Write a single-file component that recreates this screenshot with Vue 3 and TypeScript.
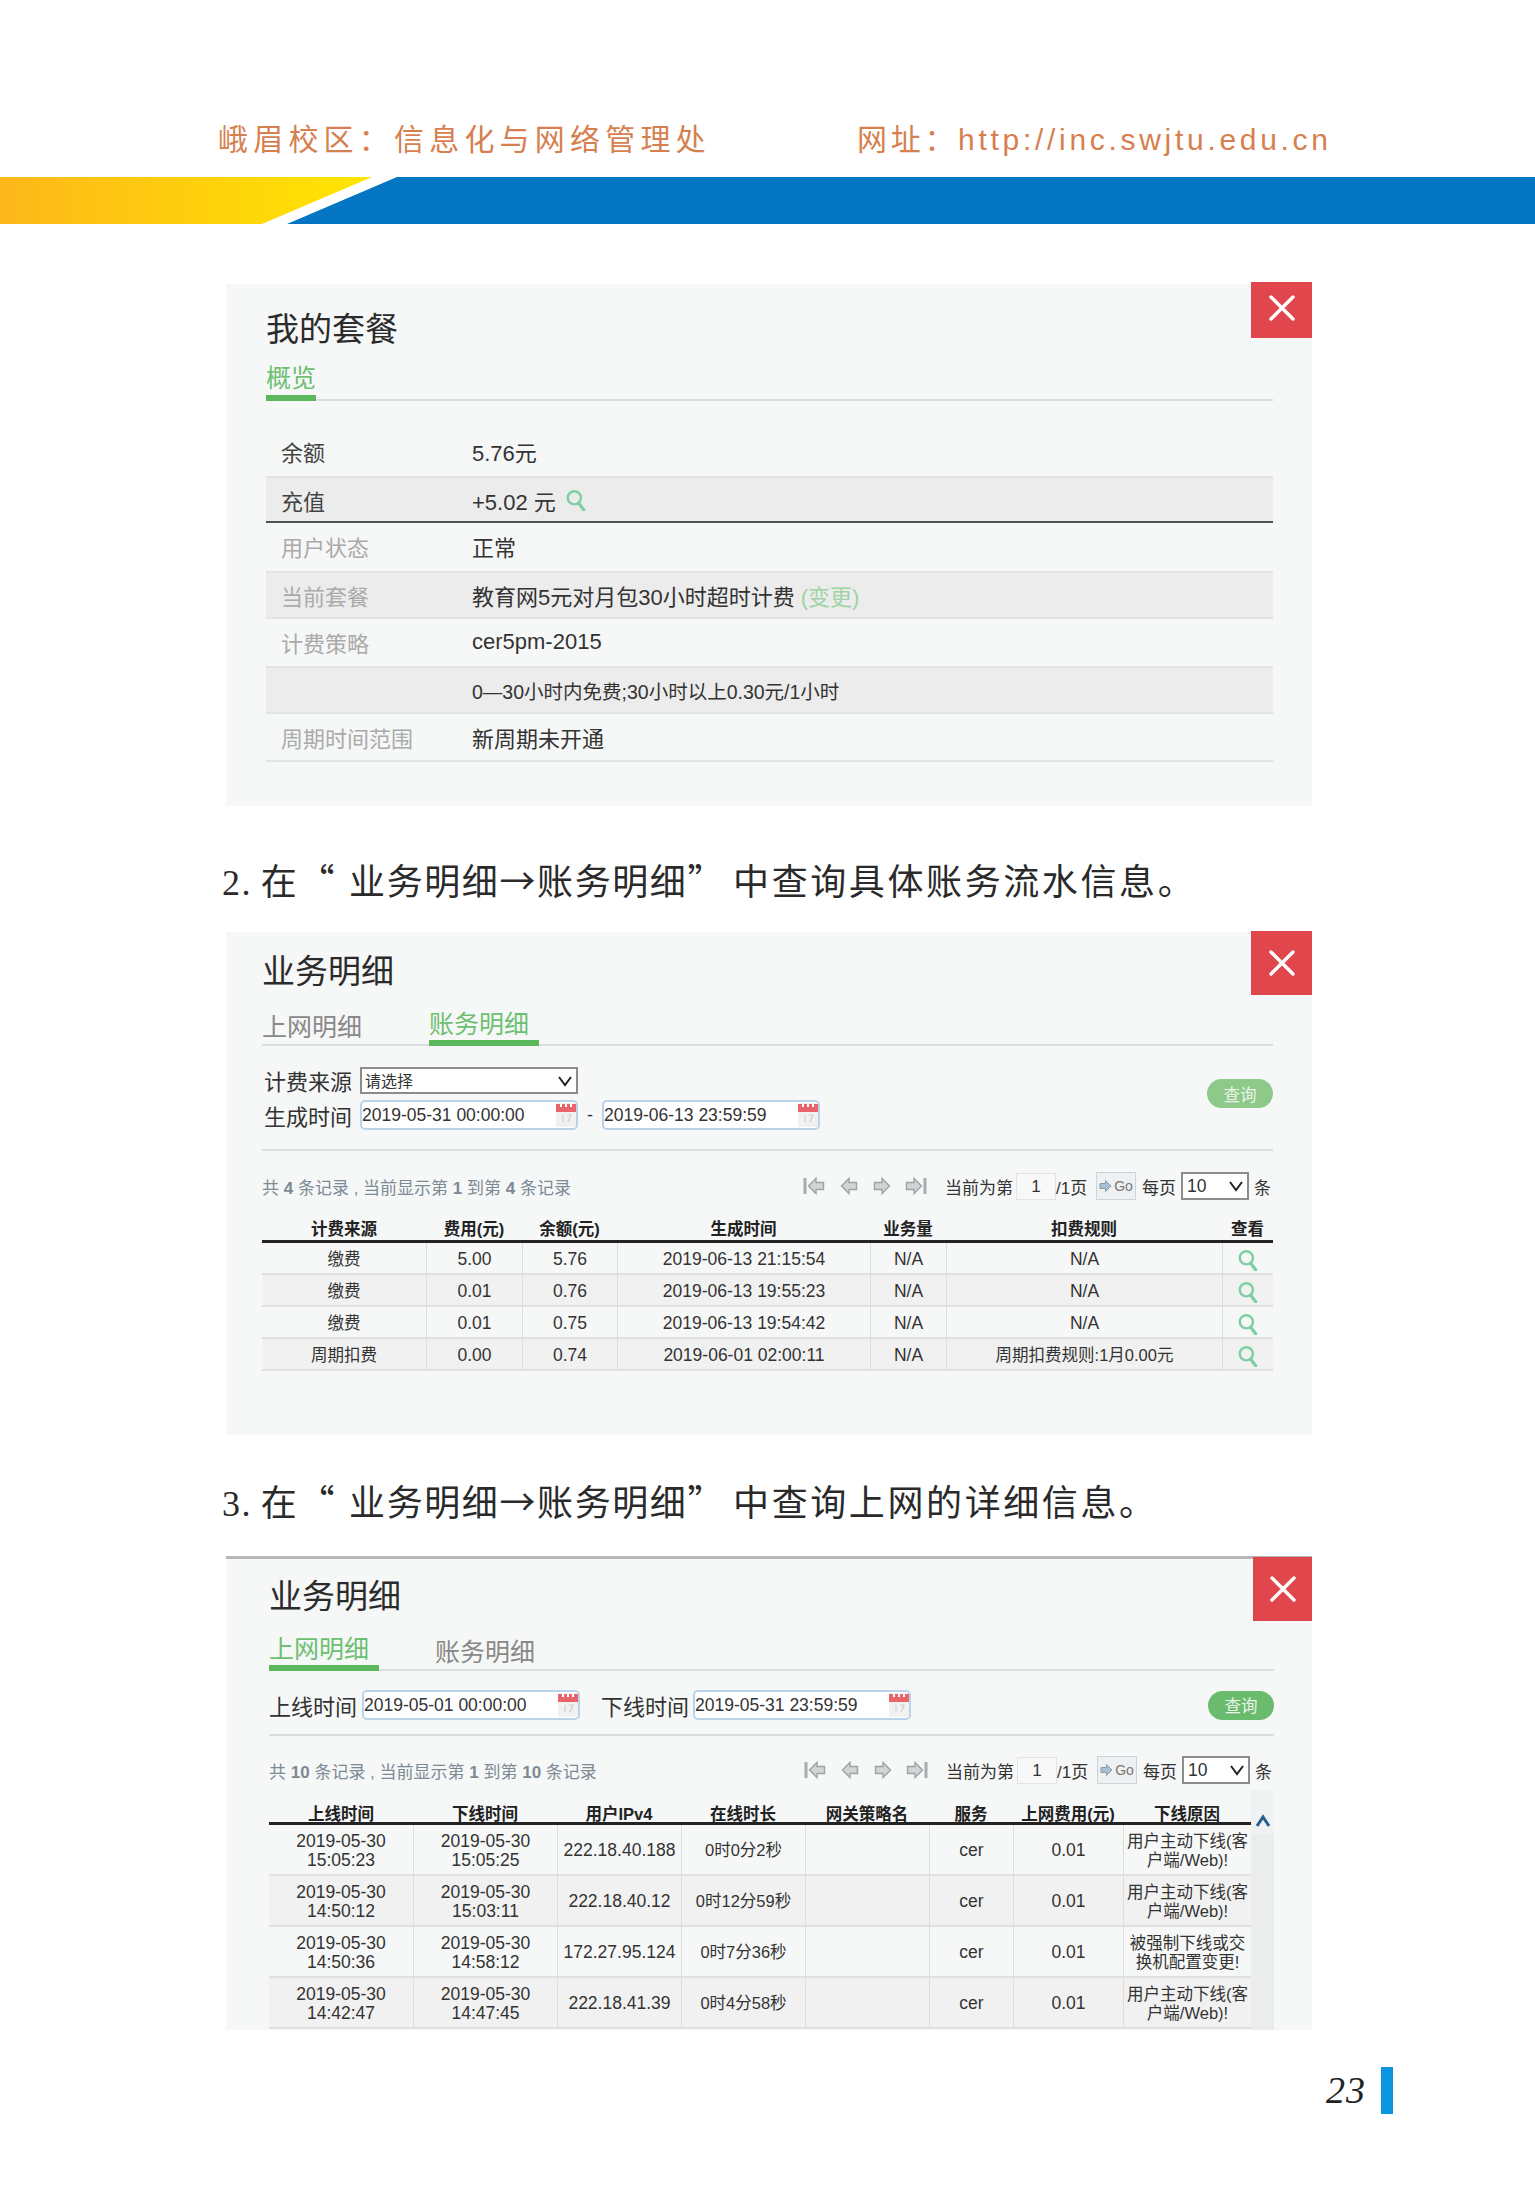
<script setup lang="ts">
interface Row { k: string; v: string; shaded: boolean; dark?: boolean; small?: boolean; link?: string; search?: boolean; strongLabel?: boolean }
const rows: Row[] = [
  { k: '余额', v: '5.76元', shaded: false, strongLabel: true },
  { k: '充值', v: '+5.02 元', shaded: true, dark: true, search: true, strongLabel: true },
  { k: '用户状态', v: '正常', shaded: false },
  { k: '当前套餐', v: '教育网5元对月包30小时超时计费', shaded: true, link: '(变更)' },
  { k: '计费策略', v: 'cer5pm-2015', shaded: false },
  { k: '', v: '0—30小时内免费;30小时以上0.30元/1小时', shaded: true, small: true },
  { k: '周期时间范围', v: '新周期未开通', shaded: false },
]
const billHead = ['计费来源', '费用(元)', '余额(元)', '生成时间', '业务量', '扣费规则', '查看']
const billRows = [
  ['缴费', '5.00', '5.76', '2019-06-13 21:15:54', 'N/A', 'N/A'],
  ['缴费', '0.01', '0.76', '2019-06-13 19:55:23', 'N/A', 'N/A'],
  ['缴费', '0.01', '0.75', '2019-06-13 19:54:42', 'N/A', 'N/A'],
  ['周期扣费', '0.00', '0.74', '2019-06-01 02:00:11', 'N/A', '周期扣费规则:1月0.00元'],
]
const netHead = ['上线时间', '下线时间', '用户IPv4', '在线时长', '网关策略名', '服务', '上网费用(元)', '下线原因']
const netRows = [
  ['2019-05-30 15:05:23', '2019-05-30 15:05:25', '222.18.40.188', '0时0分2秒', '', 'cer', '0.01', '用户主动下线(客户端/Web)!'],
  ['2019-05-30 14:50:12', '2019-05-30 15:03:11', '222.18.40.12', '0时12分59秒', '', 'cer', '0.01', '用户主动下线(客户端/Web)!'],
  ['2019-05-30 14:50:36', '2019-05-30 14:58:12', '172.27.95.124', '0时7分36秒', '', 'cer', '0.01', '被强制下线或交换机配置变更!'],
  ['2019-05-30 14:42:47', '2019-05-30 14:47:45', '222.18.41.39', '0时4分58秒', '', 'cer', '0.01', '用户主动下线(客户端/Web)!'],
]
const isLatin = (s: string): boolean => /^[\x00-\x7f]*$/.test(s)
</script>

<template>
  <div class="page">
    <svg width="0" height="0" class="defs">
      <defs>
        <symbol id="mag" viewBox="0 0 20 20">
          <circle cx="8.5" cy="8" r="6" fill="none" stroke="currentColor" stroke-width="2.2" />
          <path d="M12.5 13 L17 19" stroke="currentColor" stroke-width="3" stroke-linecap="round" />
        </symbol>
        <symbol id="cal" viewBox="0 0 20 24">
          <rect x="0" y="0" width="20" height="24" fill="#f1f1f1" />
          <rect x="0" y="1" width="20" height="8" fill="#e9656b" />
          <path d="M5 1v3M10 1v3M15 1v3" stroke="#fff" stroke-width="2" />
          <path d="M7 12v7M11 12h4l-3 7" fill="none" stroke="#cfcfcf" stroke-width="1.2" />
        </symbol>
        <symbol id="first" viewBox="0 0 22 22">
          <path d="M2 3v16" stroke="#a9acae" stroke-width="3" />
          <path d="M5.5 11 L13 3.5 V7.5 H20.5 V14.5 H13 V18.5 Z" fill="#d2d4d5" stroke="#a0a3a5" stroke-width="1.4" />
        </symbol>
        <symbol id="prev" viewBox="0 0 18 22">
          <path d="M1.5 11 L9 3.5 V7.5 H16.5 V14.5 H9 V18.5 Z" fill="#d2d4d5" stroke="#a0a3a5" stroke-width="1.4" />
        </symbol>
        <symbol id="next" viewBox="0 0 18 22">
          <path d="M16.5 11 L9 3.5 V7.5 H1.5 V14.5 H9 V18.5 Z" fill="#d2d4d5" stroke="#a0a3a5" stroke-width="1.4" />
        </symbol>
        <symbol id="last" viewBox="0 0 22 22">
          <path d="M20 3v16" stroke="#a9acae" stroke-width="3" />
          <path d="M16.5 11 L9 3.5 V7.5 H1.5 V14.5 H9 V18.5 Z" fill="#d2d4d5" stroke="#a0a3a5" stroke-width="1.4" />
        </symbol>
        <symbol id="goa" viewBox="0 0 13 14">
          <path d="M12 7 L6.5 1.5 V4.5 H1 V9.5 H6.5 V12.5 Z" fill="#a9c0d4" stroke="#8b9bab" stroke-width="1" />
        </symbol>
        <symbol id="x" viewBox="0 0 30 30">
          <path d="M4 4 L26 26 M26 4 L4 26" stroke="#fff" stroke-width="3.4" stroke-linecap="round" />
        </symbol>
      </defs>
    </svg>

    <header class="head">
      <span class="head-a">峨眉校区：信息化与网络管理处</span>
      <span class="head-b">网址：http://inc.swjtu.edu.cn</span>
    </header>

    <svg class="banner" viewBox="0 0 1535 47" preserveAspectRatio="none">
      <defs>
        <linearGradient id="gold" x1="0" x2="1" y1="0" y2="0">
          <stop offset="0" stop-color="#fdb71a" />
          <stop offset="1" stop-color="#ffe600" />
        </linearGradient>
      </defs>
      <polygon points="0,0 372,0 262,47 0,47" fill="url(#gold)" />
      <polygon points="397,0 1535,0 1535,47 287,47" fill="#0375c2" />
    </svg>

    <section class="panel p1">
      <button class="close"><svg width="30" height="30"><use href="#x" /></svg></button>
      <h2 class="title">我的套餐</h2>
      <div class="tabs">
        <span class="tab on">概览</span>
      </div>
      <div class="kv">
        <div v-for="r in rows" :key="r.v" class="kv-row" :class="{ shaded: r.shaded, dark: r.dark }">
          <span class="kv-k" :class="{ strong: r.strongLabel }">{{ r.k }}</span>
          <span class="kv-v" :class="{ small: r.small }">{{ r.v }}<span v-if="r.link" class="link">{{ r.link }}</span><svg v-if="r.search" class="mag-inline" width="22" height="22"><use href="#mag" /></svg></span>
        </div>
      </div>
    </section>

    <p class="step s2"><span class="lat">2. </span>在<span class="qo">“</span>业务明细→账务明细<span class="qc">”</span><span class="tail">中查询具体账务流水信息。</span></p>

    <section class="panel p2">
      <button class="close"><svg width="30" height="30"><use href="#x" /></svg></button>
      <h2 class="title">业务明细</h2>
      <div class="tabs">
        <span class="tab off">上网明细</span>
        <span class="tab on wide">账务明细</span>
      </div>
      <div class="filter f2">
        <div class="filter-lines">
          <div class="line">
            <span class="lbl">计费来源</span>
            <span class="select big">请选择<svg class="chev" width="16" height="12" viewBox="0 0 16 12"><path d="M2 2 L8 10 L14 2" fill="none" stroke="#222" stroke-width="2" /></svg></span>
          </div>
          <div class="line">
            <span class="lbl">生成时间</span>
            <span class="date">2019-05-31 00:00:00<svg class="cal" width="20" height="24"><use href="#cal" /></svg></span>
            <span class="dash">-</span>
            <span class="date">2019-06-13 23:59:59<svg class="cal" width="20" height="24"><use href="#cal" /></svg></span>
          </div>
        </div>
        <button class="query pale">查询</button>
      </div>
      <div class="pager">
        <span class="count">共 <b>4</b> 条记录 , 当前显示第 <b>1</b> 到第 <b>4</b> 条记录</span>
        <div class="pg-right">
          <svg class="ic" width="22" height="22"><use href="#first" /></svg>
          <svg class="ic" width="18" height="22"><use href="#prev" /></svg>
          <svg class="ic" width="18" height="22"><use href="#next" /></svg>
          <svg class="ic" width="22" height="22"><use href="#last" /></svg>
          <span class="pg-t">当前为第</span>
          <span class="pg-input">1</span>
          <span class="pg-of">/1页</span>
          <span class="go"><svg width="13" height="14"><use href="#goa" /></svg>Go</span>
          <span class="pg-per">每页</span>
          <span class="select num">10<svg class="chev" width="16" height="12" viewBox="0 0 16 12"><path d="M2 2 L8 10 L14 2" fill="none" stroke="#222" stroke-width="2" /></svg></span>
          <span class="pg-unit">条</span>
        </div>
      </div>
      <div class="grid bill g-head">
        <span v-for="h in billHead" :key="h" class="hd">{{ h }}</span>
      </div>
      <div v-for="(r, i) in billRows" :key="i" class="grid bill g-row" :class="{ alt: i % 2 === 1 }">
        <span v-for="(c, j) in r" :key="j" class="cell" :class="{ latin: isLatin(c) }">{{ c }}</span>
        <span class="cell"><svg class="mag" width="22" height="22"><use href="#mag" /></svg></span>
      </div>
    </section>

    <p class="step s3"><span class="lat">3. </span>在<span class="qo">“</span>业务明细→账务明细<span class="qc">”</span><span class="tail">中查询上网的详细信息。</span></p>

    <section class="panel p3">
      <button class="close"><svg width="30" height="30"><use href="#x" /></svg></button>
      <h2 class="title">业务明细</h2>
      <div class="tabs">
        <span class="tab on wide">上网明细</span>
        <span class="tab off">账务明细</span>
      </div>
      <div class="filter f3">
        <div class="line">
          <span class="lbl">上线时间</span>
          <span class="date">2019-05-01 00:00:00<svg class="cal" width="20" height="24"><use href="#cal" /></svg></span>
          <span class="lbl second">下线时间</span>
          <span class="date">2019-05-31 23:59:59<svg class="cal" width="20" height="24"><use href="#cal" /></svg></span>
        </div>
        <button class="query">查询</button>
      </div>
      <div class="pager">
        <span class="count">共 <b>10</b> 条记录 , 当前显示第 <b>1</b> 到第 <b>10</b> 条记录</span>
        <div class="pg-right">
          <svg class="ic" width="22" height="22"><use href="#first" /></svg>
          <svg class="ic" width="18" height="22"><use href="#prev" /></svg>
          <svg class="ic" width="18" height="22"><use href="#next" /></svg>
          <svg class="ic" width="22" height="22"><use href="#last" /></svg>
          <span class="pg-t">当前为第</span>
          <span class="pg-input">1</span>
          <span class="pg-of">/1页</span>
          <span class="go"><svg width="13" height="14"><use href="#goa" /></svg>Go</span>
          <span class="pg-per">每页</span>
          <span class="select num">10<svg class="chev" width="16" height="12" viewBox="0 0 16 12"><path d="M2 2 L8 10 L14 2" fill="none" stroke="#222" stroke-width="2" /></svg></span>
          <span class="pg-unit">条</span>
        </div>
      </div>
      <div class="net-wrap">
        <div class="net-table">
          <div class="grid net g-head">
            <span v-for="h in netHead" :key="h" class="hd">{{ h }}</span>
          </div>
          <div v-for="(r, i) in netRows" :key="i" class="grid net g-row" :class="{ alt: i % 2 === 1 }">
            <span v-for="(c, j) in r" :key="j" class="cell" :class="{ latin: isLatin(c) || j < 2, wrap: j === 0 || j === 1, reason: j === 7 }">{{ c }}</span>
          </div>
        </div>
        <div class="scroll">
          <div class="scroll-up">
            <svg width="16" height="14" viewBox="0 0 16 14"><path d="M2 12 L8 3 L14 12" fill="none" stroke="#27608f" stroke-width="3" /></svg>
          </div>
        </div>
      </div>
    </section>

    <footer class="foot">
      <span class="pno">23</span>
      <span class="bar"></span>
    </footer>
  </div>
</template>

<style>
html, body { margin: 0; background: #fff; }
</style>

<style scoped>
.page {
  width: 1535px;
  height: 2185px;
  overflow: hidden;
  background: #fff;
  font-family: "Liberation Sans", "Noto Sans CJK SC", sans-serif;
  color: #333;
}
.defs { position: absolute; }
.head {
  display: flex;
  padding: 121px 0 0 218px;
  height: 177px;
  box-sizing: border-box;
  font-size: 30px;
  line-height: 38px;
  color: #d67f4f;
  white-space: nowrap;
}
.head-a { width: 639px; letter-spacing: 5.2px; }
.head-b { letter-spacing: 3.7px; }
.banner { display: block; width: 1535px; height: 47px; }

.panel {
  position: relative;
  margin-left: 226px;
  width: 1086px;
  background: #f6f7f7;
  box-sizing: border-box;
}
.p1 { margin-top: 60px; height: 522px; padding: 26px 39px 0 40px; }
.p2 { height: 503px; padding: 20px 39px 0 36px; }
.p3 { height: 474px; padding: 18px 38px 0 43px; border-top: 3px solid #b5b7b8; }
.close {
  position: absolute;
  right: 0;
  top: -1px;
  width: 61px;
  height: 64px;
  padding: 0;
  border: 0;
  background: #e0464b;
  display: flex;
  align-items: center;
  justify-content: center;
}
.p1 .close { height: 56px; top: -2px; }
.p1 .close svg { margin-top: -4px; }
.p3 .close { width: 59px; top: -2px; height: 64px; }
.title {
  margin: 0;
  font-size: 33px;
  line-height: 40px;
  font-weight: 400;
  color: #2b2b2b;
}
.tabs {
  display: flex;
  gap: 69px;
  margin-top: 14px;
  height: 38px;
  border-bottom: 2px solid #dcdddd;
  font-size: 25px;
  line-height: 32px;
}
.p1 .tabs { margin-top: 10px; height: 39px; }
.p3 .tabs { gap: 56px; }
.tab { display: block; box-sizing: border-box; white-space: nowrap; }
.tab.off { color: #888; padding-top: 5px; }
.tab.on { color: #6dbf72; border-bottom: 6px solid #5cb85c; height: 40px; padding-top: 2px; }
.tab.wide { width: 110px; }
.p2 .tab.off { width: 98px; }
.p1 .tab.on { height: 41px; width: 50px; }

.kv { margin-top: 27px; }
.kv-row {
  display: flex;
  align-items: center;
  height: 47.7px;
  box-sizing: border-box;
  border-bottom: 2px solid transparent;
  font-size: 22px;
}
.kv-row.shaded { background: #ececec; border-top: 2px solid #e2e3e3; border-bottom: 2px solid #e2e3e3; }
.kv-row:last-child { border-bottom: 2px solid #e2e3e3; }
.kv-row.dark { border-bottom: 2px solid #4d5552; }
.kv-k { width: 206px; padding-left: 15px; box-sizing: border-box; color: #aaa; }
.kv-k.strong { color: #444; }
.kv-v { color: #333; display: flex; align-items: center; white-space: pre; }
.kv-v.small { font-size: 19.5px; }
.link { color: #9ed3a4; margin-left: 6px; }
.mag-inline { color: #7fcfa5; margin-left: 9px; }

.step {
  margin: 0;
  padding-left: 222px;
  font-family: "Noto Sans CJK SC", sans-serif;
  font-size: 36px;
  line-height: 48px;
  letter-spacing: 1.6px;
  color: #2a2a2a;
  white-space: pre;
  box-sizing: border-box;
}
.lat { font-family: "Liberation Serif", serif; margin-right: -2px; }
.qo { margin-right: 13px; }
.qc { margin-right: 8px; }
.tail { letter-spacing: 2.6px; }
.s2 { padding-top: 49px; height: 126px; }
.s3 { padding-top: 41px; height: 121px; }

.filter { display: flex; justify-content: space-between; border-bottom: 2px solid #dcdddd; box-sizing: border-box; }
.f2 { height: 105px; padding-top: 20px; }
.f2 .query { margin-top: 13px; }
.f3 { height: 65px; padding-top: 5px; align-items: center; }
.filter-lines { display: flex; flex-direction: column; gap: 7px; }
.line { display: flex; align-items: center; height: 28px; }
.lbl { font-size: 22px; color: #333; width: 98px; padding-left: 2px; box-sizing: border-box; white-space: nowrap; }
.f3 .lbl { width: 93px; padding-left: 0; }
.f3 .lbl.second { width: 92px; margin-left: 21px; }
.select {
  position: relative;
  display: inline-flex;
  align-items: center;
  box-sizing: border-box;
  border: 2px solid #8c8c8c;
  background: #fff;
  color: #333;
}
.select.big { width: 218px; height: 27px; font-size: 16px; padding-left: 3px; }
.select.num { width: 68px; height: 28px; font-size: 17.5px; padding-left: 4px; margin-left: 5px; }
.chev { position: absolute; right: 3px; top: 6px; }
.date {
  position: relative;
  display: inline-flex;
  align-items: center;
  width: 218px;
  height: 30px;
  box-sizing: border-box;
  border: 2px solid #b9d3ea;
  border-radius: 5px;
  background: #fff;
  font-size: 17.5px;
  color: #333;
  white-space: nowrap;
}
.cal { position: absolute; right: 0; top: 1px; }
.dash { width: 24px; text-align: center; font-size: 18px; }
.query {
  width: 66px;
  height: 29px;
  border: 0;
  padding: 0;
  border-radius: 15px;
  background: #6abb6e;
  color: #e8f5e8;
  font-size: 16.5px;
  font-family: inherit;
}
.query.pale { background: #8fc98a; }

.pager {
  display: flex;
  justify-content: space-between;
  align-items: center;
  margin-top: 7px;
  height: 56px;
  font-size: 17px;
  color: #333;
  white-space: nowrap;
}
.p3 .pager { margin-top: 6px; }
.count { color: #7d8a94; }
.count b { font-weight: 700; }
.pg-right { display: flex; align-items: center; padding-right: 2px; }
.ic { flex: none; }
.pg-right .ic:nth-child(1) { margin-right: 15px; }
.pg-right .ic:nth-child(2) { margin-right: 15px; }
.pg-right .ic:nth-child(3) { margin-right: 14px; }
.pg-right .ic:nth-child(4) { margin-right: 18px; }
.pg-t { width: 71px; }
.pg-input {
  width: 40px;
  height: 27px;
  box-sizing: border-box;
  border: 1px solid #e2e3e3;
  background: #f8f8f8;
  text-align: center;
  line-height: 25px;
}
.pg-of { width: 33px; }
.pg-per { width: 34px; }
.pg-unit { width: 17px; margin-left: 5px; }
.go {
  display: inline-flex;
  align-items: center;
  justify-content: center;
  gap: 2px;
  width: 40px;
  height: 28px;
  box-sizing: border-box;
  margin: 0 6px 0 7px;
  border: 1px solid #c9d5dd;
  background: #eef0f1;
  font-size: 14px;
  color: #777;
}

.grid { display: grid; }
.bill { grid-template-columns: 164px 96px 95px 253px 76px 276px 51px; }
.net { grid-template-columns: 144px 144px 124px 124px 124px 84px 110px 128px; }
.g-head { border-bottom: 3px solid #222; height: 29px; box-sizing: border-box; padding-top: 5px; }
.net.g-head { height: 27px; padding-top: 6px; }
.hd { text-align: center; font-size: 16.5px; line-height: 20px; color: #222; font-weight: 700; white-space: nowrap; }
.g-row { border-bottom: 2px solid #dfe0e0; box-sizing: border-box; }
.bill.g-row { height: 32px; }
.net.g-row { height: 51px; }
.alt { background: #f1f1f1; }
.cell {
  display: flex;
  align-items: center;
  justify-content: center;
  text-align: center;
  box-sizing: border-box;
  padding-top: 3px;
  font-size: 16.5px;
  color: #333;
  border-left: 1px solid #dcdddd;
  white-space: nowrap;
  line-height: 19.3px;
}
.cell.latin { font-size: 17.5px; }
.cell:first-child { border-left: 0; }
.cell.wrap { white-space: normal; padding: 3px 20px 0; }
.cell.reason { white-space: normal; padding: 3px 1px 0; }
.mag { color: #7fcfa5; }

.net-wrap { display: flex; height: 232px; }
.net-table { width: 982px; flex: none; }
.scroll { width: 23px; margin-top: -8px; height: 240px; background: #ebeced; }
.scroll-up { height: 45px; background: #f0f1f2; display: flex; align-items: flex-end; justify-content: center; padding-bottom: 7px; box-sizing: border-box; }

.foot {
  display: flex;
  justify-content: flex-end;
  align-items: center;
  margin-top: 37px;
  width: 1393px;
  gap: 15px;
}
.pno {
  font-family: "Liberation Serif", serif;
  font-style: italic;
  font-size: 38px;
  line-height: 47px;
  color: #222;
  letter-spacing: 1px;
}
.bar { width: 12px; height: 47px; background: #0a96de; }
</style>
